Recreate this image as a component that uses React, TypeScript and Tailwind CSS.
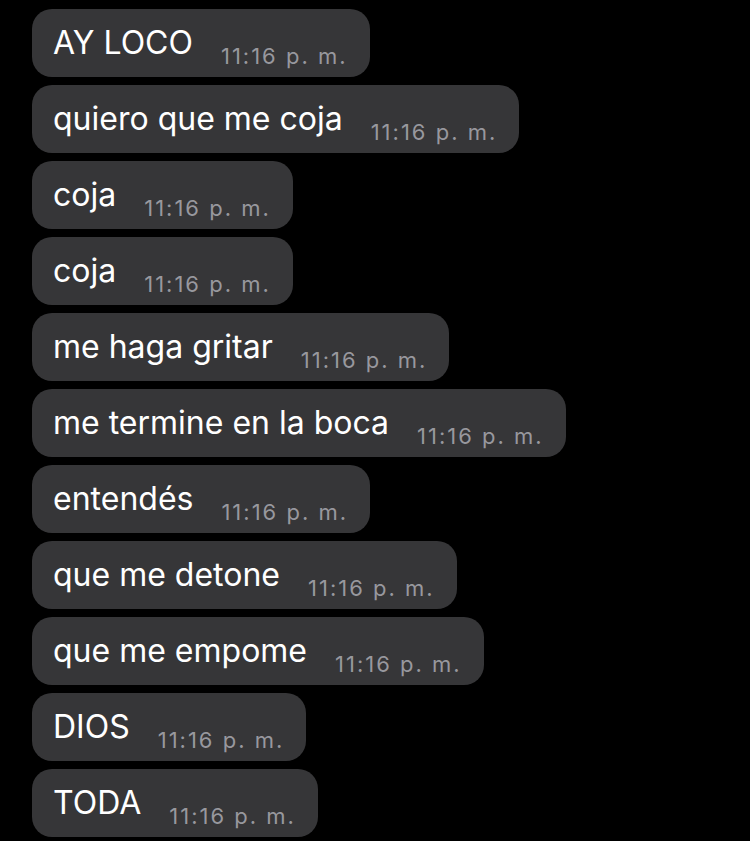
const messages = [
  "AY LOCO",
  "quiero que me coja",
  "coja",
  "coja",
  "me haga gritar",
  "me termine en la boca",
  "entendés",
  "que me detone",
  "que me empome",
  "DIOS",
  "TODA",
];

export default function App() {
  return (
    <div className="w-[750px] h-[841px] bg-black overflow-hidden font-['Inter','Noto_Sans',sans-serif]">
      <div className="flex flex-col items-start gap-[8px] pt-[9px] pl-[32px]">
        {messages.map((m, i) => (
          <div
            key={i}
            className="flex items-start h-[68px] pl-[21px] pr-[22px] rounded-[20px] bg-[#363638]"
          >
            <span className="text-[32px] leading-[38px] mt-[15px] text-white">{m}</span>
            <span className="text-[22px] leading-[26px] mt-[34px] ml-[28px] text-[#98989e] tracking-[2px]">
              11:16 p. m.
            </span>
          </div>
        ))}
      </div>
    </div>
  );
}
